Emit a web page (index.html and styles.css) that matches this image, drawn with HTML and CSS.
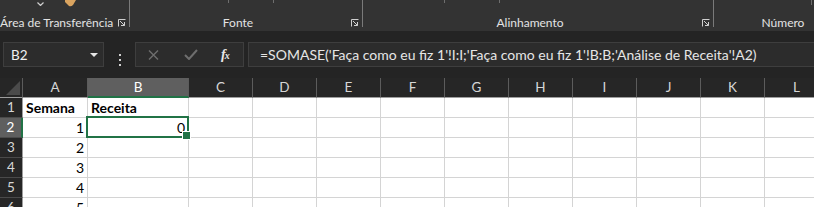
FILE: index.html
```html
<!DOCTYPE html>
<html lang="pt">
<head>
<meta charset="utf-8">
<title>Excel</title>
<link rel="stylesheet" href="styles.css">
</head>
<body>
<div class="app">
  <div class="ribbon">
    <div class="group g1">
      <div class="top">
        <svg class="chev" width="7" height="4" viewBox="0 0 7 4"><path d="M0.5 0.5 L3.5 3.5 L6.5 0.5" fill="none" stroke="#cfcfcf" stroke-width="1.2"/></svg>
        <svg class="clip" width="11" height="7" viewBox="0 0 11 7"><path d="M0 0 H11 L8 5 Q6 7 4 6 L0 2 Z" fill="#d9a35f"/></svg>
      </div>
      <div class="labelrow"><span class="label">Área de Transferência</span><span class="launch"><svg width="8" height="8" viewBox="0 0 8 8"><path d="M0.5 7.5 V0.5 H7.5 M2 2 L6.5 6.5 M6.5 3 V6.5 H3" fill="none" stroke="#d0d0d0" stroke-width="1"/></svg></span></div>
    </div>
    <div class="sep"></div>
    <div class="group g2">
      <div class="top"><i class="tick tk-a"></i><i class="tick tk-b"></i></div>
      <div class="labelrow"><span class="label">Fonte</span><span class="launch"><svg width="8" height="8" viewBox="0 0 8 8"><path d="M0.5 7.5 V0.5 H7.5 M2 2 L6.5 6.5 M6.5 3 V6.5 H3" fill="none" stroke="#d0d0d0" stroke-width="1"/></svg></span></div>
    </div>
    <div class="sep"></div>
    <div class="group g3">
      <div class="top"><i class="tick tk-c"></i><i class="tick tk-d"></i></div>
      <div class="labelrow"><span class="label">Alinhamento</span><span class="launch"><svg width="8" height="8" viewBox="0 0 8 8"><path d="M0.5 7.5 V0.5 H7.5 M2 2 L6.5 6.5 M6.5 3 V6.5 H3" fill="none" stroke="#d0d0d0" stroke-width="1"/></svg></span></div>
    </div>
    <div class="sep"></div>
    <div class="group g4">
      <div class="top"><i class="tick tk-e"></i></div>
      <div class="labelrow"><span class="label">Número</span><span class="launch"></span></div>
    </div>
  </div>

  <div class="fbar">
    <div class="namebox"><span class="ref">B2</span><svg width="8" height="4" viewBox="0 0 8 4"><path d="M0 0 H8 L4 4 Z" fill="#e6e6e6"/></svg></div>
    <div class="dots"><i></i><i></i><i></i></div>
    <div class="btns">
      <svg class="bx" width="11" height="10" viewBox="0 0 11 10"><path d="M1 0.5 L10 9.5 M10 0.5 L1 9.5" stroke="#6e6e6e" stroke-width="1.4" fill="none"/></svg>
      <svg class="bok" width="14" height="11" viewBox="0 0 14 11"><path d="M1 6 L5 10 L13 1" stroke="#6e6e6e" stroke-width="2" fill="none"/></svg>
      <span class="fx">f<small>x</small></span>
    </div>
    <div class="formula">=SOMASE('Faça como eu fiz 1'!I:I;'Faça como eu fiz 1'!B:B;'Análise de Receita'!A2)</div>
  </div>

  <div class="sheet">
    <div class="hd corner"><svg width="14" height="14" viewBox="0 0 14 14"><path d="M14 0 V14 H0 Z" fill="#4b4b4b"/></svg></div>
    <div class="hd">A</div>
    <div class="hd sel-col">B</div>
    <div class="hd">C</div>
    <div class="hd">D</div>
    <div class="hd">E</div>
    <div class="hd">F</div>
    <div class="hd">G</div>
    <div class="hd">H</div>
    <div class="hd">I</div>
    <div class="hd">J</div>
    <div class="hd">K</div>
    <div class="hd">L</div>

    <div class="rh">1</div>
    <div class="c b">Semana</div>
    <div class="c b">Receita</div>
    <div class="c"></div><div class="c"></div><div class="c"></div><div class="c"></div><div class="c"></div><div class="c"></div><div class="c"></div><div class="c"></div><div class="c"></div><div class="c"></div>

    <div class="rh sel-row">2</div>
    <div class="c n">1</div>
    <div class="c n active">0</div>
    <div class="c"></div><div class="c"></div><div class="c"></div><div class="c"></div><div class="c"></div><div class="c"></div><div class="c"></div><div class="c"></div><div class="c"></div><div class="c"></div>

    <div class="rh">3</div>
    <div class="c n">2</div>
    <div class="c"></div>
    <div class="c"></div><div class="c"></div><div class="c"></div><div class="c"></div><div class="c"></div><div class="c"></div><div class="c"></div><div class="c"></div><div class="c"></div><div class="c"></div>

    <div class="rh">4</div>
    <div class="c n">3</div>
    <div class="c"></div>
    <div class="c"></div><div class="c"></div><div class="c"></div><div class="c"></div><div class="c"></div><div class="c"></div><div class="c"></div><div class="c"></div><div class="c"></div><div class="c"></div>

    <div class="rh">5</div>
    <div class="c n">4</div>
    <div class="c"></div>
    <div class="c"></div><div class="c"></div><div class="c"></div><div class="c"></div><div class="c"></div><div class="c"></div><div class="c"></div><div class="c"></div><div class="c"></div><div class="c"></div>

    <div class="rh">6</div>
    <div class="c n">5</div>
    <div class="c"></div>
    <div class="c"></div><div class="c"></div><div class="c"></div><div class="c"></div><div class="c"></div><div class="c"></div><div class="c"></div><div class="c"></div><div class="c"></div><div class="c"></div>
  </div>
</div>
</body>
</html>
```

FILE: styles.css
```css
* { box-sizing: border-box; }
html, body { margin: 0; padding: 0; background: #242424; }
.app {
  width: 814px;
  height: 207px;
  overflow: hidden;
  font-family: "Lato", "Noto Sans", sans-serif;
}

/* Ribbon */
.ribbon {
  display: flex;
  height: 31px;
  background: #333333;
  overflow: hidden;
}
.group {
  display: flex;
  flex-direction: column;
  flex: none;
}
.g1 { width: 129px; }
.g2 { width: 232px; }
.g3 { width: 350px; }
.g4 { width: 154px; }
.sep {
  flex: none;
  width: 1px;
  height: 27px;
  background: #7a7a7a;
}
.top {
  height: 15px;
  display: flex;
  align-items: flex-start;
}
.chev { margin: 2px 0 0 37px; }
.clip { margin-left: 21px; }
.tick {
  display: block;
  width: 1px;
  height: 3px;
  background: #6e6e6e;
}
.tk-a { margin-left: 98px; }
.tk-b { margin-left: 44px; }
.tk-c { margin-left: 81px; }
.tk-d { margin-left: 54px; }
.tk-e { margin-left: 97px; height: 5px; }
.labelrow {
  height: 16px;
  display: flex;
}
.label {
  flex: 1;
  text-align: center;
  font-size: 12px;
  line-height: 16px;
  color: #e3e3e3;
  white-space: nowrap;
}
.launch {
  flex: none;
  width: 16px;
  padding: 4px 0 0 5px;
  line-height: 0;
}

/* Formula bar */
.fbar {
  height: 47px;
  padding-top: 11px;
  display: flex;
  background: #242424;
}
.namebox, .btns, .formula {
  height: 25px;
  background: #2c2c2c;
  border: 1px solid #3e3e3e;
}
.namebox {
  width: 101px;
  margin-left: 3px;
  display: flex;
  align-items: center;
  justify-content: space-between;
  padding: 0 5px 0 7px;
}
.ref {
  font-size: 13.5px;
  color: #f0f0f0;
}
.dots {
  width: 31px;
  display: flex;
  flex-direction: column;
  align-items: center;
  justify-content: center;
  gap: 3px;
}
.dots i {
  display: block;
  width: 2px;
  height: 2px;
  background: #d0d0d0;
}
.btns {
  width: 109px;
  display: flex;
  align-items: center;
  padding-left: 12px;
}
.bx { margin-right: 25px; }
.bok { margin-right: 23px; }
.fx {
  font-family: "Liberation Serif", serif;
  font-style: italic;
  font-weight: bold;
  font-size: 14px;
  color: #e8e8e8;
  letter-spacing: -1px;
}
.fx small { font-size: 10px; }
.formula {
  flex: 1 0 auto;
  margin-left: 4px;
  margin-right: -4px;
  padding-left: 11px;
  font-size: 14px;
  line-height: 23px;
  color: #e6e6e6;
  white-space: nowrap;
}

/* Sheet */
.sheet {
  display: grid;
  grid-template-columns: 23px 65px 101px repeat(10, 64px);
  grid-auto-rows: 20px;
  height: 129px;
  overflow: hidden;
  background: #262626;
}
.hd, .rh {
  background: #262626;
  color: #d6d6d6;
  font-size: 13.5px;
  line-height: 19px;
  text-align: center;
  border-right: 1px solid #5c5c5c;
  border-bottom: 1px solid #9e9e9e;
}
.rh {
  border-bottom: 1px solid #4a4a4a;
  border-right: 1px solid #9e9e9e;
}
.corner {
  display: flex;
  align-items: flex-end;
  justify-content: flex-end;
  padding: 0 2px 2px 0;
}
.sel-col {
  background: #5f5f5f;
  color: #ffffff;
  border-bottom: 2px solid #217346;
}
.sel-row {
  background: #5f5f5f;
  color: #ffffff;
  border-right: 2px solid #217346;
}
.c {
  background: #ffffff;
  border-right: 1px solid #d4d4d4;
  border-bottom: 1px solid #d4d4d4;
  font-size: 14px;
  line-height: 20px;
  color: #000;
  padding: 0 3px;
  white-space: nowrap;
}
.b { font-weight: bold; }
.n { text-align: right; }
.active { position: relative; }
.active::after {
  content: "";
  position: absolute;
  top: -2px;
  left: -2px;
  right: -1px;
  bottom: -1px;
  border: 2px solid #217346;
  z-index: 2;
}
.active::before {
  content: "";
  position: absolute;
  right: -3px;
  bottom: -3px;
  width: 7px;
  height: 7px;
  background: #217346;
  border: 1px solid #ffffff;
  z-index: 3;
}
```
